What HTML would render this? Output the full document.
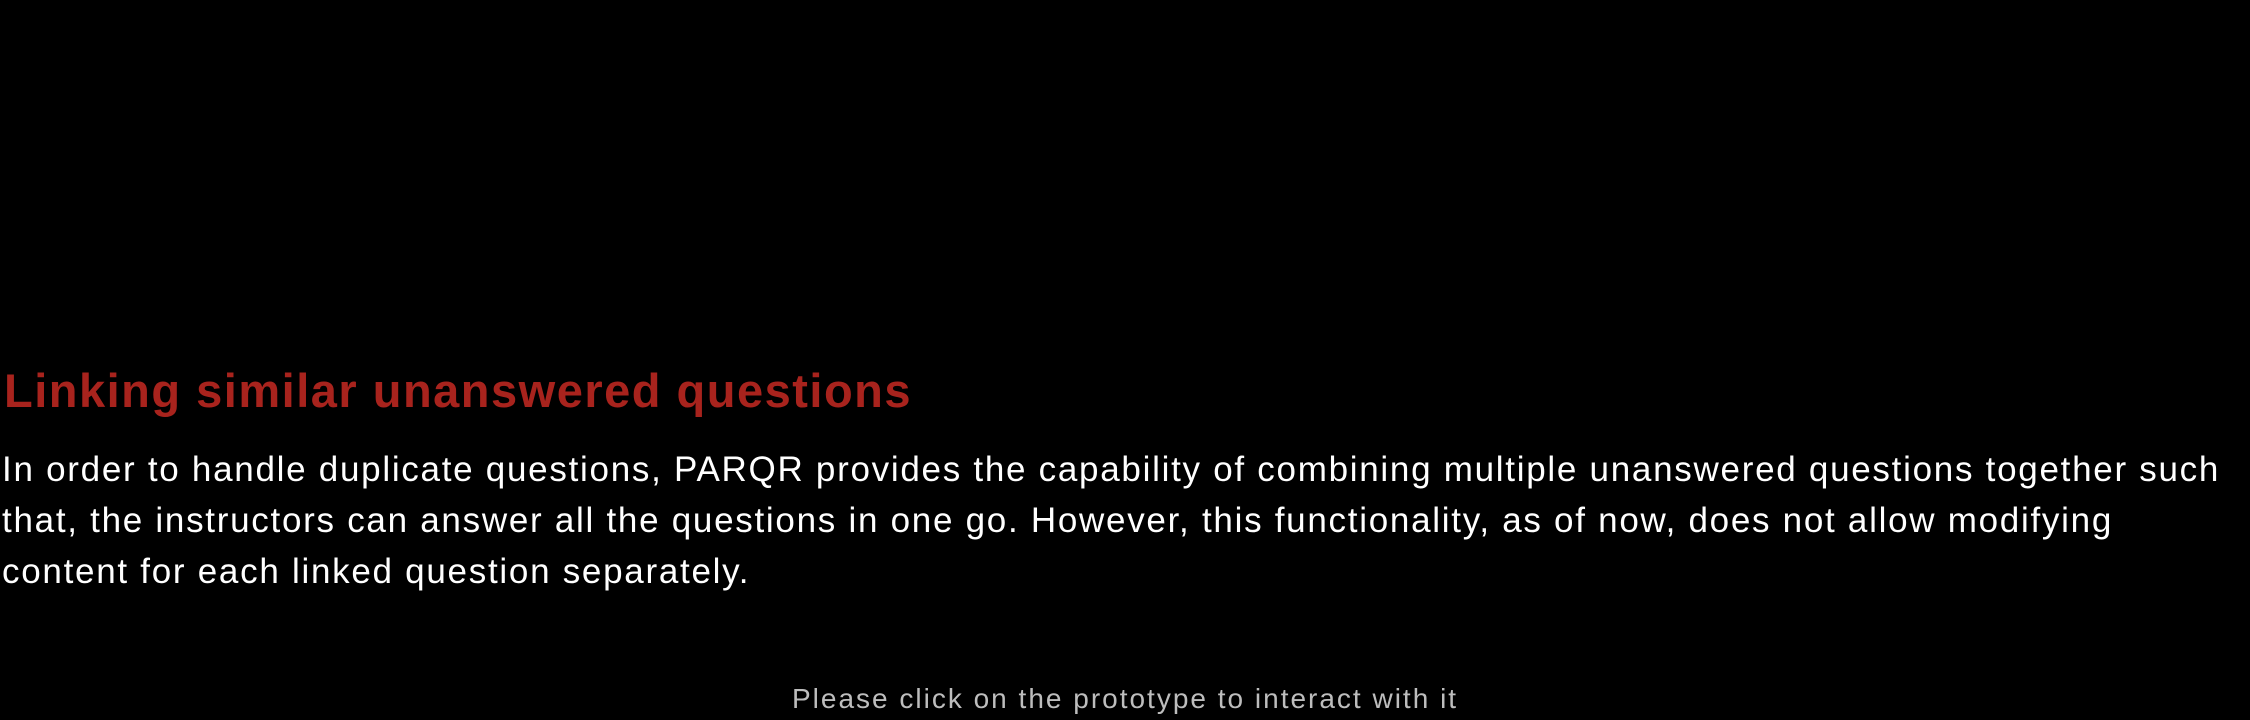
<!DOCTYPE html>
<html><head><meta charset="utf-8"><style>
html,body{margin:0;padding:0;background:#000;width:2250px;height:720px;overflow:hidden;font-family:"Liberation Sans",sans-serif}
.h{position:absolute;left:4px;top:363px;font-size:47px;font-weight:bold;color:#a8231d;letter-spacing:1.5px;white-space:nowrap}
.b{position:absolute;left:2px;white-space:nowrap;color:#fff;font-size:35px;letter-spacing:1.72px}
.f{position:absolute;left:792px;top:683px;font-size:28px;color:#bdbdbd;letter-spacing:2px;white-space:nowrap}
</style></head><body>
<div class="h">Linking similar unanswered questions</div>
<div class="b" style="top:450px">In order to handle duplicate questions, PARQR provides the capability of combining multiple unanswered questions together such</div>
<div class="b" style="top:501px">that, the instructors can answer all the questions in one go. However, this functionality, as of now, does not allow modifying</div>
<div class="b" style="top:552px">content for each linked question separately.</div>
<div class="f">Please click on the prototype to interact with it</div>
</body></html>
